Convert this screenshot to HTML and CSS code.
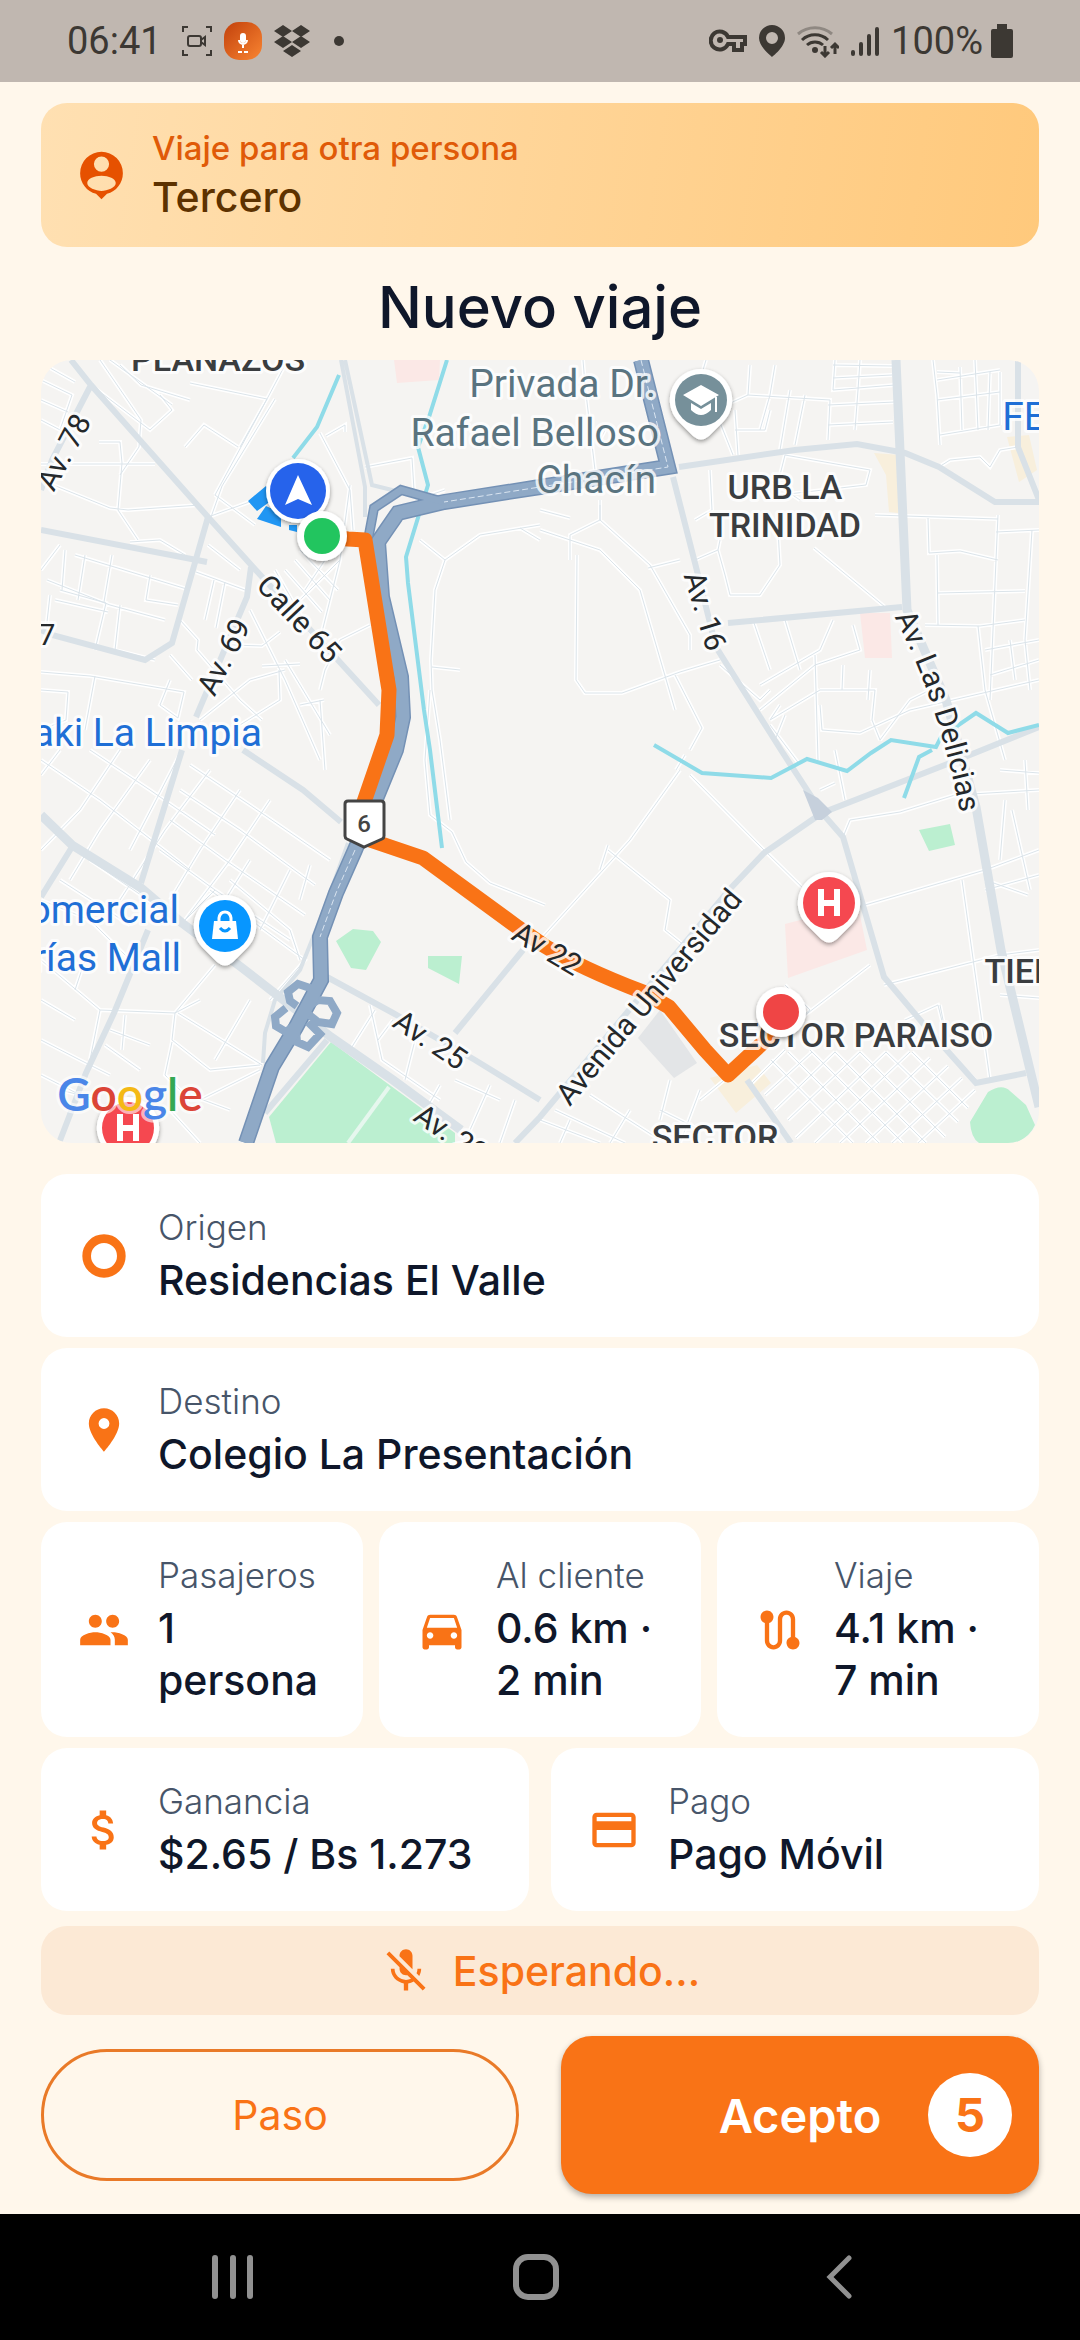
FILE: index.html
```html
<!DOCTYPE html>
<html lang="es">
  <head>
    <meta charset="UTF-8" />
    <meta name="viewport" content="width=device-width, initial-scale=1.0" />
    <title>Nuevo viaje</title>
    <link rel="stylesheet" href="styles.css">
  </head>
  <body>
    <!-- Status bar -->
    <header class="status-bar">
      <div class="status-group">
        <span class="status-time">06:41</span>
        <svg width="30" height="30" viewBox="0 0 30 30" fill="none" stroke="#3c3833" stroke-width="2">
          <path d="M1 6V1h5M24 1h5v5M29 24v5h-5M6 29H1v-5" />
          <rect x="6" y="10" width="13" height="10" rx="2" />
          <path d="M19 14l4-3v8l-4-3z" />
        </svg>
        <svg width="38" height="38" viewBox="0 0 38 38">
          <defs>
            <linearGradient id="app-bg" x1="0" y1="0" x2="1" y2="1">
              <stop offset="0" stop-color="#c2410c" />
              <stop offset="1" stop-color="#f98532" />
            </linearGradient>
          </defs>
          <rect width="38" height="38" rx="15" fill="url(#app-bg)" />
          <rect x="16" y="11" width="6" height="10" rx="3" fill="#fff" />
          <path d="M15 18a4 4 0 0 0 8 0M19 22v4M14 30h4M20 30h4" stroke="#fff" stroke-width="2" fill="none" />
        </svg>
        <svg width="36" height="33" viewBox="0 0 36 33" fill="#3c3833">
          <path d="M9 0l9 6-9 6-9-6zM27 0l9 6-9 6-9-6zM9 11l9 6-9 6-9-6zM27 11l9 6-9 6-9-6zM18 20l9 6-9 6-9-6z" />
        </svg>
        <span class="status-dot"></span>
      </div>
      <div class="status-group">
        <svg width="38" height="24" viewBox="0 0 38 24" fill="none" stroke="#3c3833" stroke-width="4">
          <path d="M19 8h17v7h-3v6h-8v-6h-6a9 9 0 1 1 0-7z" />
          <circle cx="11" cy="11" r="3" fill="#3c3833" stroke="none" />
        </svg>
        <svg width="26" height="32" viewBox="0 0 26 32" fill="#3c3833">
          <path fill-rule="evenodd" d="M13 0A13 13 0 0 0 0 13c0 9 13 19 13 19s13-10 13-19A13 13 0 0 0 13 0zm0 7a6 6 0 1 1 0 12 6 6 0 0 1 0-12z" />
        </svg>
        <svg width="42" height="33" viewBox="0 0 42 33" fill="none" stroke="#3c3833" stroke-width="3">
          <path d="M1 9a26 26 0 0 1 34 0" stroke="#8f8882" />
          <path d="M5 15a19 19 0 0 1 26 0M10 20a12 12 0 0 1 16 0" />
          <circle cx="18" cy="25" r="3" fill="#3c3833" stroke="none" />
          <path d="M28 21v9M24 27l4 4 4-4M38 29v-9M34 23l4-4 4 4" />
        </svg>
        <svg width="28" height="30" viewBox="0 0 28 30" stroke="#3c3833" stroke-width="4" stroke-linecap="round">
          <path d="M2 26v2M10 18v10M18 10v18M26 3v25" />
        </svg>
        <span class="status-battery">100%
          <svg width="22" height="34" viewBox="0 0 22 34" fill="#3c3833">
            <path d="M6 0h10v5h4q2 0 2 2v25q0 2-2 2H2q-2 0-2-2V7q0-2 2-2h4z" />
          </svg>
        </span>
      </div>
    </header>

    <main class="trip">
      <section class="banner">
        <svg class="banner-icon" viewBox="0 0 24 24" fill="#e65100">
          <path fill-rule="evenodd" d="M12 2a9 9 0 0 0-9 9c0 4.170 2.840 7.670 6.690 8.690L12 22l2.310-2.310C18.160 18.670 21 15.170 21 11a9 9 0 0 0-9-9zm0 2a3.200 3.200 0 1 1 0 6.400A3.200 3.200 0 0 1 12 4zm0 14.500c-2.400 0-6-1.300-6-3.300 0-1.900 3-3.100 6-3.100s6 1.200 6 3.100c0 2-3.600 3.300-6 3.300z" />
        </svg>
        <div>
          <div class="banner-label">Viaje para otra persona</div>
          <div class="banner-name">Tercero</div>
        </div>
      </section>

      <h1>Nuevo viaje</h1>

      <!-- Route map -->
      <svg class="map" viewBox="41 360 998 783" role="img" aria-label="Mapa de la ruta">
        <defs>
          <path id="minor" d="
            M41 380L72 395L60 430M41 400L68 412M41 420L64 432M50 368L75 382M100 360L141 420L139 447L120 475M110 360L172 405M91 385L150 430L172 410L160 395
            M120 365L141 385L190 400M190 383L267 399L215 495M285 365L267 399M238 447L204 425L185 447M267 399L240 447M275 399L222 486L210 520
            M99 442L120 442L122 463L118 510L138 540M41 464L155 464M41 480L110 508L128 510L200 505M130 542L160 540L185 555M215 495L255 525M208 517L255 500
            M47 580L110 605L165 620M65 550L62 590M60 590L106 603L95 650M75 555L190 590M85 555L78 600M112 555L104 602M150 575L146 600L178 605M120 605L115 650L155 660
            M50 595L45 640M55 600L108 612M41 570L60 545M196 572L245 590M208 545L240 570M214 580L205 620M225 582L216 628M180 620L198 640L197 650L240 700L262 720
            M41 672L90 676L184 692L178 718L160 705L170 680M95 676L85 730M41 690L68 692L66 720L41 730M170 655L192 680M250 610L285 680L320 760
            M200 720L250 680L285 670M232 645L262 646L280 632M262 666L300 664M285 660L330 735M279 670L280 700L240 725M320 700L325 770M300 705L324 700M370 625L340 640L325 670L320 690
            M326 436L345 425L345 432M320 433L350 490L353 530M365 467L412 458L414 490M350 485L340 560L320 640M285 570L322 612M295 560L330 600M300 550L338 590M340 560L300 600M325 560L305 590M275 570L315 640
            M415 500L445 490M420 540L445 560L480 535L540 525M445 560L435 590L431 660L432 690M432 667L460 670M540 540L520 528
            M430 690L425 760L430 815L452 832L466 862L490 883L545 905M432 690L440 740L450 820
            M41 760L100 800L190 870M60 750L41 775M90 750L150 790L215 835M120 750L80 810L41 850M150 760L100 830L70 880M182 750L130 850M210 770L165 830L120 900M240 790L200 850L170 900M270 800L230 860L185 920
            M190 765L250 805L330 860M180 790L240 830L315 885M170 820L225 860L305 915M160 850L215 890L290 940M210 890L305 960L270 1000M230 880L290 930L300 960M250 860L225 900M290 870L260 930M310 865L300 900M185 920L215 890
            M41 900L90 920L130 960M60 880L130 925M90 860L170 915M41 960L100 1010L175 1013L200 1000M75 990L85 960M100 1010L90 1060M125 1015L122 1050M175 1013L172 1040L210 1070L260 1065M178 1013L262 1065
            M41 1000L75 1020M41 1040L80 1060L110 1075M41 1075L90 1100M175 1013L215 965M250 1000L215 1060M172 1042L165 1075L190 1100M100 1100L60 1090M110 1030L150 1045M105 1045L140 1070M200 1100L260 1070M170 1110L200 1143M190 1095L230 1110
            M375 1010L350 1050M370 1005L382 1060L440 1100M393 1020L378 1040M415 1040L405 1080M440 1085L420 1120M455 1080L500 1100M490 1085L470 1130M515 1100L500 1143
            M583 360L585 385L595 470M605 430L600 440M706 360L700 380M750 365L748 395L715 410M748 395L830 400L828 440M775 365L770 395L760 430M790 390L780 450M805 395L795 445
            M835 360L833 390L895 385M860 360L858 390L855 430M833 365L892 366M833 378L892 375M828 405L895 402M828 425L893 422M770 410L765 430L735 430M715 410L733 455M735 410L738 455
            M933 360L937 395L940 445M937 372L960 373M937 380L1000 370M937 400L1000 392M940 435L1000 425M960 367L962 430M975 360L978 430M990 372L988 430M1000 372L1000 425
            M939 467L950 460L980 457L990 467L1000 450L1018 447M710 470L712 510L695 520M780 475L785 455L870 470L866 485L780 495M770 480L800 500M695 560L718 550L725 575L730 595L760 595L780 565L778 530
            M814 548L885 607M720 540L718 550M875 515L998 519M928 518L929 553L960 551L998 560M998 515L996 560L990 700M996 532L1039 530M1032 530L1025 640M937 555L938 625M938 593L1025 591M925 625L980 626L1025 620
            M600 500L600 520L570 535L570 560M600 520L600 505M540 510L570 518M540 530L600 550L640 590L675 710M600 520L650 565L690 635L690 650M577 555L576 680L585 693L622 693L680 672M648 568L680 560M680 672L720 660M675 675L702 728L690 750M720 665L760 700L770 690
            M753 620L770 670M785 620L800 670M833 620L820 650L760 685M853 625L860 650L815 665L760 710M870 670L868 700M815 655L818 760M843 665L842 690M780 705L770 720L820 690M820 690L875 690L872 720M820 705L822 730L860 733L910 710L1039 680
            M880 740L910 700L930 690M978 626L985 690L1005 760M985 650L1039 640M990 675L1039 660M1010 640L1015 680M1025 640L1030 690M785 715L775 740M770 725L800 765M872 720L880 740
            M680 770L630 840L540 940M690 775L764 850L810 895M676 770L685 755M608 850L670 900L665 930L690 950M608 845L600 870M835 750L845 800M820 790L835 783M843 837L850 820L900 812L955 795L1039 790
            M865 905L985 870L1039 850M884 985L1000 955L1039 950M962 880L990 1080M1005 800L1000 860M985 890L1039 875M1012 810L1030 890M985 880L1028 895M1000 995L1039 998M940 1005L945 1030M905 1020L938 1005L943 1025M1000 770L1039 773M1025 760L1028 810
            M870 965L760 1050M785 985L810 1010L700 1100M540 1120L600 1143M560 1143L570 1120M555 1110L625 1143M670 1080L660 1120M590 1095L660 1140M630 1110L610 1143M660 1110L700 1130M700 1090L680 1143" />
          <!-- diamond blocks around Sector Paraiso -->
          <path id="blocks" d="
            M771 1060L853 1143M788 1052L879 1143M810 1050L903 1143M835 1052L926 1143M860 1052L945 1137M886 1052L958 1122M912 1052L968 1108M938 1042L975 1080
            M750 1085L785 1050M765 1095L812 1052M775 1110L835 1052M788 1120L860 1052M796 1138L886 1052M815 1143L910 1052M840 1143L930 1058M866 1143L948 1066M892 1143L962 1078M918 1143L975 1090" />
          <path id="delicias" d="M895 618Q938 700 960 812" />
          <g id="pin">
            <path d="M0-31A31 31 0 0 1 23 21L8 36Q0 43-8 36L-23 21A31 31 0 0 1 0-31z" fill="#fff" />
          </g>
          <filter id="shadow" x="-30%" y="-30%" width="160%" height="160%">
            <feDropShadow dx="0" dy="2" stdDeviation="2" flood-color="#000" flood-opacity="0.4" />
          </filter>
        </defs>

        <rect x="41" y="360" width="998" height="783" fill="#f5f4f2" />

        <!-- areas -->
        <g fill="#fbe8e6">
          <path d="M394 360H440L439 380L397 383zM860 613H890L892 658H865zM785 924L858 905L867 950L788 978z" />
        </g>
        <g fill="#f8efdc">
          <path d="M874 453L900 455L898 513L889 512L886 475zM1007 437L1029 435L1037 470L1019 482zM710 1078L757 1065L771 1083L736 1113z" />
        </g>
        <path d="M660 1010L697 1063L674 1078L638 1038z" fill="#e3e5e7" />

        <use href="#minor" class="road-casing" />
        <use href="#minor" class="road-core" />
        <use href="#blocks" class="road-casing" />
        <use href="#blocks" class="road-core" />

        <g fill="#bbefd0">
          <path d="M331 1042L455 1133V1143H276L269 1117z" />
          <path d="M336 941L353 929L373 931L381 942L366 970L351 968zM428 956H462L459 984L428 968zM919 830L950 824L955 845L929 851z" />
          <path d="M970 1122L988 1092Q1002 1083 1010 1091L1026 1105L1035 1125Q1030 1137 1015 1143H979Q971 1138 970 1122z" />
        </g>
        <path d="M389 1087L348 1143" stroke="#e6f7ee" stroke-width="4" />

        <!-- avenues -->
        <g class="avenue">
          <path d="M71 360L91 385L208 517L253 567L379 705M91 385L52 460L41 490" />
          <path d="M41 530L207 562M208 517L172 643L145 660L52 635L41 630M251 567L247 597L196 717M182 750L141 883M148 930L114 1013L86 1073L59 1143" />
          <path d="M243 750L303 790L341 822M72 847L41 897" />
          <path d="M673 477L695 563L716 647L781 750L822 813L843 837L884 977L926 1027L976 1083L1026 1073" />
          <path d="M679 467L795 450L857 444L905 453L939 467L995 502H1039M728 623L902 607" />
          <path d="M515 1143L540 1117L729 890L764 853L822 813L950 763L1039 727" />
          <path d="M327 977L393 1013L475 1060L540 1100M523 950L455 1033M747 1080L791 1143M1018 360V447L1039 500M327 1040L265 1113" />
          <path d="M341 360L365 487V517M345 360L372 485L400 492" class="thin" />
          <path d="M348 843L324 910L300 970L275 1000L265 1033L263 1063" class="thin" />
        </g>
        <path d="M803 790L818 798L832 812L822 820L815 820z" fill="#c6d0dc" />
        <g class="avenue wide">
          <path d="M41 815L72 845L141 888L182 923L241 967L331 1037L393 1080L461 1130" />
          <path d="M896 360L907 610L946 700L976 807L1001 950L1039 1107" />
        </g>

        <!-- rivers -->
        <g fill="none" stroke="#8fdbe8" stroke-width="4">
          <path d="M339 375L317 427L293 458M447 360L429 417L418 447L428 485L406 557L408 583L424 710L430 750L442 848" />
          <path d="M654 745L702 773L771 778L807 759L847 771L871 753L891 740L936 747L941 737L976 713L1008 733L1039 725M932 750L919 757L904 798" />
        </g>

        <!-- highways -->
        <g class="highway edge">
          <path d="M641 360L668 467L540 487L444 502L398 513L378 542L382 597L401 677L403 717L396 750L355 850L336 893L320 937L321 980L296 1027L272 1067L246 1143" />
          <path d="M444 502L401 490L374 508L368 540" class="ramp" />
          <path d="M316 990L298 984L288 992L290 1001L297 1006M308 1006L318 1000L330 1001L337 1013L332 1024L318 1022L308 1014M286 1008L275 1017L276 1026L286 1032L294 1026M296 1030L297 1042L308 1047L320 1034L308 1022" class="loop" />
        </g>
        <g class="highway">
          <path d="M641 360L668 467L540 487L444 502L398 513L378 542L382 597L401 677L403 717L396 750L355 850L336 893L320 937L321 980L296 1027L272 1067L246 1143" />
          <path d="M444 502L401 490L374 508L368 540" class="ramp" />
        </g>
        <path d="M641 360L668 467L540 487L444 502M355 850L336 893L320 937" fill="none" stroke="#d9e4f0" stroke-width="1" stroke-dasharray="6 3" />

        <!-- walk to the pick-up point and trip route -->
        <path d="M248 501L266 486L275 498L257 511zM257 519L266 506L281 513V527zM289 525H297V532L289 530z" fill="#2196f3" />
        <path d="M322 536L348 539L365 540L389 690L387 735L364 802V838L423 858L516 926L543 945Q580 968 643 992L669 1007L705 1050L728 1075L781 1026" fill="none" stroke="#f97316" stroke-width="15" stroke-linejoin="round" />

        <!-- place names -->
        <g class="street">
          <text transform="translate(64 452) rotate(-62)" dy="10">Av. 78</text>
          <text transform="translate(299 619) rotate(47)" dy="10">Calle 65</text>
          <text transform="translate(224 657) rotate(-63)" dy="10">Av. 69</text>
          <text transform="translate(705 611) rotate(73)" dy="10">Av. 16</text>
          <text transform="translate(547 949) rotate(31)" dy="10">Av 22</text>
          <text transform="translate(649 997) rotate(-50)" dy="10">Avenida Universidad</text>
          <text transform="translate(430 1040) rotate(34)" dy="10">Av. 25</text>
          <text transform="translate(451 1134) rotate(34)" dy="10">Av. 29</text>
          <text x="47" y="645">7</text>
          <text><textPath href="#delicias" startOffset="50%">Av. Las Delicias</textPath></text>
        </g>
        <g class="district">
          <text x="218" y="371">PLANAZOS</text>
          <text x="785" y="499">URB LA</text>
          <text x="785" y="537">TRINIDAD</text>
          <text x="856" y="1047">SECTOR PARAISO</text>
          <text x="715" y="1149">SECTOR</text>
          <text x="1020" y="983">TIER</text>
        </g>
        <g class="place school">
          <text x="656" y="397">Privada Dr.</text>
          <text x="659" y="446">Rafael Belloso</text>
          <text x="656" y="493">Chacín</text>
        </g>
        <g class="place">
          <text x="262" y="746">aki La Limpia</text>
          <text x="179" y="923">omercial</text>
          <text x="181" y="971">rías Mall</text>
          <text x="1046" y="430">FE</text>
        </g>

        <!-- route shield -->
        <path d="M348 801H381Q384 801 384 804V836Q384 838 382 839L364 847L347 839Q345 838 345 836V804Q345 801 348 801z" fill="#fff" stroke="#444" stroke-width="3" />
        <text x="364" y="832" class="shield">6</text>

        <!-- pins -->
        <g transform="translate(701 400)">
          <use href="#pin" filter="url(#shadow)" />
          <circle r="26" fill="#76909a" />
          <path d="M0-15L18-5L0 6L-18-5zM-10 3L0 9L10 3V10Q0 20-10 10zM14-3H16V12H14z" fill="#fff" />
        </g>
        <g transform="translate(225 926)">
          <use href="#pin" filter="url(#shadow)" />
          <circle r="26" fill="#0796ff" />
          <path d="M-11-5H11L13 13H-13z" fill="#fff" />
          <path d="M-6-5V-8Q-5-14 0-14Q5-14 6-8V-5" fill="none" stroke="#fff" stroke-width="3" />
          <path d="M-5 2Q0 8 5 2" fill="none" stroke="#0796ff" stroke-width="3" />
        </g>
        <g transform="translate(829 903)">
          <use href="#pin" filter="url(#shadow)" />
          <circle r="26" fill="#f54850" />
          <path d="M-11-14H-5V-3H5V-14H11V13H5V3H-5V13H-11z" fill="#fff" />
        </g>
        <g transform="translate(128 1128)">
          <use href="#pin" filter="url(#shadow)" />
          <circle r="26" fill="#f54850" />
          <path d="M-11-14H-5V-3H5V-14H11V13H5V3H-5V13H-11z" fill="#fff" />
        </g>
        <text x="130" y="1111" class="logo"><tspan fill="#4a86e8">G</tspan><tspan fill="#db4437">o</tspan><tspan fill="#f4b915">o</tspan><tspan fill="#4a86e8">g</tspan><tspan fill="#34a853">l</tspan><tspan fill="#db4437">e</tspan></text>

        <!-- driver, origin and destination -->
        <g filter="url(#shadow)">
          <circle cx="298" cy="491" r="32" fill="#fff" />
          <circle cx="298" cy="491" r="28" fill="#2563eb" />
          <path d="M298 475L312 505L298 499L285 505z" fill="#fff" />
        </g>
        <g filter="url(#shadow)">
          <circle cx="322" cy="536" r="25" fill="#fff" />
          <circle cx="322" cy="536" r="18" fill="#22c55e" />
        </g>
        <g filter="url(#shadow)">
          <circle cx="781" cy="1012" r="25" fill="#fff" />
          <circle cx="781" cy="1012" r="18" fill="#ef4444" />
        </g>
      </svg>

      <!-- Trip details -->
      <section class="details">
        <div class="card">
          <svg class="icon" viewBox="0 0 24 24"><circle cx="12" cy="12" r="8" fill="none" stroke="currentColor" stroke-width="4" /></svg>
          <div class="card-text">
            <div class="card-label">Origen</div>
            <div class="card-value">Residencias El Valle</div>
          </div>
        </div>
        <div class="card">
          <svg class="icon" viewBox="0 0 24 24"><path d="M12 2C8.130 2 5 5.130 5 9c0 5.250 7 13 7 13s7-7.750 7-13c0-3.870-3.130-7-7-7zm0 9.500a2.500 2.500 0 0 1 0-5 2.500 2.500 0 0 1 0 5z" /></svg>
          <div class="card-text">
            <div class="card-label">Destino</div>
            <div class="card-value">Colegio La Presentación</div>
          </div>
        </div>
        <div class="card-row thirds">
          <div class="card">
            <svg class="icon" viewBox="0 0 24 24"><path d="M16 11c1.660 0 2.990-1.340 2.990-3S17.660 5 16 5s-3 1.340-3 3 1.340 3 3 3zm-8 0c1.660 0 2.990-1.340 2.990-3S9.660 5 8 5 5 6.340 5 8s1.340 3 3 3zm0 2c-2.330 0-7 1.170-7 3.500V19h14v-2.500C15 14.170 10.330 13 8 13zm8 0c-.29 0-.62.02-.97.05 1.160.84 1.970 1.970 1.970 3.450V19h6v-2.500c0-2.330-4.670-3.500-7-3.500z" /></svg>
            <div class="card-text">
              <div class="card-label">Pasajeros</div>
              <div class="card-value">1 persona</div>
            </div>
          </div>
          <div class="card">
            <svg class="icon" viewBox="0 0 24 24"><path d="M18.920 6.010C18.720 5.420 18.160 5 17.500 5h-11c-.66 0-1.210.42-1.420 1.010L3 12v8c0 .55.45 1 1 1h1c.55 0 1-.45 1-1v-1h12v1c0 .55.45 1 1 1h1c.55 0 1-.45 1-1v-8l-2.080-5.990zM6.500 16c-.83 0-1.500-.67-1.500-1.500S5.670 13 6.500 13s1.500.67 1.500 1.500S7.330 16 6.500 16zm11 0c-.83 0-1.500-.67-1.500-1.500s.67-1.500 1.500-1.500 1.500.67 1.500 1.500-.67 1.500-1.500 1.500zM5 11l1.500-4.500h11L19 11H5z" /></svg>
            <div class="card-text">
              <div class="card-label">Al cliente</div>
              <div class="card-value">0.6 km · 2 min</div>
            </div>
          </div>
          <div class="card">
            <svg class="icon" viewBox="0 0 24 24"><path d="M19 15.180V7c0-2.210-1.790-4-4-4s-4 1.790-4 4v10c0 1.100-.9 2-2 2s-2-.9-2-2V8.820C8.160 8.400 9 7.300 9 6c0-1.660-1.340-3-3-3S3 4.340 3 6c0 1.300.84 2.400 2 2.820V17c0 2.210 1.790 4 4 4s4-1.790 4-4V7c0-1.100.9-2 2-2s2 .9 2 2v8.180A3 3 0 0 0 18 21c1.660 0 3-1.340 3-3 0-1.300-.84-2.400-2-2.820z" /></svg>
            <div class="card-text">
              <div class="card-label">Viaje</div>
              <div class="card-value">4.1 km · 7 min</div>
            </div>
          </div>
        </div>
        <div class="card-row halves">
          <div class="card">
            <svg class="icon" viewBox="0 0 24 24"><path d="M11.800 10.900c-2.270-.59-3-1.200-3-2.150 0-1.090 1.010-1.850 2.700-1.850 1.780 0 2.440.85 2.500 2.100h2.210c-.07-1.720-1.120-3.300-3.210-3.810V3h-3v2.160c-1.940.42-3.500 1.680-3.500 3.610 0 2.310 1.910 3.460 4.700 4.130 2.500.6 3 1.480 3 2.410 0 .69-.49 1.790-2.700 1.790-2.060 0-2.870-.92-2.980-2.100h-2.200c.12 2.190 1.760 3.420 3.680 3.830V21h3v-2.150c1.950-.37 3.500-1.500 3.500-3.550 0-2.840-2.430-3.810-4.700-4.400z" /></svg>
            <div class="card-text">
              <div class="card-label">Ganancia</div>
              <div class="card-value">$2.65 / Bs 1.273</div>
            </div>
          </div>
          <div class="card">
            <svg class="icon" viewBox="0 0 24 24"><path d="M20 4H4c-1.110 0-1.990.89-1.990 2L2 18c0 1.110.89 2 2 2h16c1.110 0 2-.89 2-2V6c0-1.110-.89-2-2-2zm0 14H4v-6h16v6zm0-10H4V6h16v2z" /></svg>
            <div class="card-text">
              <div class="card-label">Pago</div>
              <div class="card-value">Pago Móvil</div>
            </div>
          </div>
        </div>
      </section>

      <div class="listening">
        <svg class="icon" viewBox="0 0 24 24"><path d="M19 11h-1.700c0 .74-.16 1.430-.43 2.050l1.230 1.230c.56-.98.9-2.090.9-3.280zm-4.020.17c0-.06.02-.11.02-.17V5c0-1.660-1.340-3-3-3S9 3.340 9 5v.18l5.980 5.990zM4.270 3L3 4.270l6.010 6.010V11c0 1.660 1.330 3 2.990 3 .22 0 .44-.03.65-.08l1.660 1.660c-.71.33-1.500.52-2.310.52-2.760 0-5.300-2.100-5.300-5.100H5c0 3.410 2.720 6.230 6 6.720V21h2v-3.280c.91-.13 1.770-.45 2.540-.9L19.730 21 21 19.730 4.270 3z" /></svg>
        <span>Esperando...</span>
      </div>

      <div class="actions">
        <button type="button" class="btn-skip">Paso</button>
        <button type="button" class="btn-accept">
          <span class="accept-text">Acepto</span>
          <span class="countdown">5</span>
        </button>
      </div>
    </main>

    <!-- System navigation -->
    <nav class="nav-bar">
      <button type="button" aria-label="Recientes">
        <svg width="42" height="44" viewBox="0 0 42 44" stroke="#919191" stroke-width="6" stroke-linecap="round"><path d="M3 3v38M21 3v38M38 3v38" /></svg>
      </button>
      <button type="button" aria-label="Inicio">
        <svg width="46" height="46" viewBox="0 0 46 46" fill="none" stroke="#919191" stroke-width="6"><rect x="3" y="3" width="40" height="40" rx="12" /></svg>
      </button>
      <button type="button" aria-label="Atrás">
        <svg width="26" height="44" viewBox="0 0 26 44" fill="none" stroke="#919191" stroke-width="5" stroke-linecap="round"><path d="M23 3L4 22l19 19" /></svg>
      </button>
    </nav>
  </body>
</html>
```

FILE: styles.css
```css
* {
  box-sizing: border-box;
}

body {
  margin: 0;
  min-height: 100vh;
  display: flex;
  flex-direction: column;
  background: #fff7eb;
  color: #0f172a;
  font-family: Inter, "Open Sans", sans-serif;
}

button {
  font-family: inherit;
  cursor: pointer;
}

svg {
  display: block;
  flex: none;
}

/* Status bar */
.status-bar {
  display: flex;
  justify-content: space-between;
  align-items: center;
  height: 82px;
  padding: 0 67px;
  background: #c0b7b0;
  color: #3c3833;
  font-family: Roboto, sans-serif;
  font-size: 38px;
}

.status-group {
  display: flex;
  align-items: center;
  gap: 12px;
}

.status-time {
  margin-right: 8px;
}

.status-dot {
  width: 10px;
  height: 10px;
  margin-left: 12px;
  border-radius: 50%;
  background: #3c3833;
}

.status-battery {
  display: flex;
  align-items: center;
  gap: 8px;
}

/* Content */
.trip {
  flex: 1;
  display: flex;
  flex-direction: column;
  padding: 21px 41px 20px;
}

.banner {
  display: flex;
  align-items: center;
  gap: 22px;
  min-height: 144px;
  padding: 0 32px;
  border-radius: 26px;
  background: linear-gradient(98deg, #ffe0b2, #ffc97c);
}

.banner-icon {
  width: 57px;
  height: 57px;
}

.banner-label {
  color: #e05a08;
  font-size: 33px;
  font-weight: 500;
  line-height: 44px;
}

.banner-name {
  color: #5d3200;
  font-size: 41px;
  font-weight: 500;
  line-height: 54px;
}

h1 {
  margin: 21px 0 14px;
  font-size: 58px;
  font-weight: 500;
  line-height: 78px;
  text-align: center;
}

/* Map */
.map {
  width: 100%;
  height: auto;
  border-radius: 31px;
  font-family: Roboto, sans-serif;
}

.road-casing {
  fill: none;
  stroke: #fff;
  stroke-width: 4;
}

.road-core {
  fill: none;
  stroke: #dbe4ea;
  stroke-width: 1;
}

.avenue {
  fill: none;
  stroke: #d9e1e7;
  stroke-width: 6;
}

.avenue .thin {
  stroke-width: 4;
}

.wide {
  stroke-width: 9;
}

.highway {
  fill: none;
  stroke: #8fa9c6;
  stroke-width: 13;
}

.highway .ramp {
  stroke-width: 7;
}

.edge {
  stroke: #7491b5;
  stroke-width: 16;
}

.edge .ramp {
  stroke-width: 10;
}

.edge .loop {
  stroke: #8fa9c6;
  stroke-width: 8;
}

.map text {
  paint-order: stroke;
  stroke: #fff;
  stroke-width: 6px;
  stroke-opacity: 0.8;
  stroke-linejoin: round;
}

.street {
  fill: #24282b;
  font-size: 30px;
  text-anchor: middle;
}

.district {
  fill: #3a3d40;
  font-size: 34px;
  font-weight: 500;
  text-anchor: middle;
}

.place {
  fill: #1f6fd6;
  font-size: 39px;
  text-anchor: end;
}

.school {
  fill: #5a7480;
}

.map .shield {
  fill: #444;
  stroke: none;
  font-size: 24px;
  font-weight: 500;
  text-anchor: middle;
}

.map .logo {
  font-family: Lato, sans-serif;
  font-size: 46px;
  font-weight: 600;
  text-anchor: middle;
  stroke-opacity: 0.6;
}

/* Detail cards */
.details {
  display: flex;
  flex-direction: column;
  gap: 11px;
  margin: 31px 0 15px;
}

.card-row {
  display: grid;
}

.thirds {
  grid-template-columns: repeat(3, 1fr);
  gap: 16px;
}

.halves {
  grid-template-columns: repeat(2, 1fr);
  gap: 22px;
}

.card {
  display: flex;
  align-items: center;
  gap: 28px;
  padding: 31px 30px 31px 37px;
  border-radius: 26px;
  background: #fff;
}

.icon {
  width: 52px;
  height: 52px;
  color: #f97316;
  fill: currentColor;
}

.card-text {
  min-width: 0;
}

.card-label {
  margin-bottom: 5px;
  color: #475569;
  font-size: 35px;
  font-weight: 300;
  line-height: 44px;
}

.card-value {
  font-size: 41px;
  font-weight: 500;
  line-height: 52px;
}

/* Voice state */
.listening {
  display: flex;
  justify-content: center;
  align-items: center;
  gap: 21px;
  min-height: 89px;
  margin-bottom: 21px;
  border-radius: 26px;
  background: #fce9d5;
  color: #f97316;
  font-size: 41px;
  font-weight: 500;
}

/* Buttons */
.actions {
  display: grid;
  grid-template-columns: repeat(2, 1fr);
  align-items: center;
  gap: 42px;
}

.btn-skip {
  min-height: 132px;
  border: 3px solid #e97a28;
  border-radius: 66px;
  background: none;
  color: #f97316;
  font-size: 41px;
}

.btn-accept {
  display: grid;
  grid-template-columns: 1fr auto 1fr;
  align-items: center;
  min-height: 158px;
  padding: 0 27px;
  border: none;
  border-radius: 31px;
  background: #f97316;
  box-shadow: 0 3px 6px rgba(0, 0, 0, 0.3);
  color: #fff;
  font-size: 47px;
  font-weight: 600;
}

.accept-text {
  grid-column: 2;
}

.countdown {
  justify-self: end;
  width: 84px;
  height: 84px;
  border-radius: 50%;
  background: #fff;
  color: #f97316;
  font-weight: 700;
  line-height: 84px;
}

/* System navigation */
.nav-bar {
  display: grid;
  grid-template-columns: repeat(3, 1fr);
  height: 126px;
  padding: 0 90px 0 82px;
  background: #000;
}

.nav-bar button {
  display: flex;
  justify-content: center;
  align-items: center;
  border: none;
  background: none;
}
```
